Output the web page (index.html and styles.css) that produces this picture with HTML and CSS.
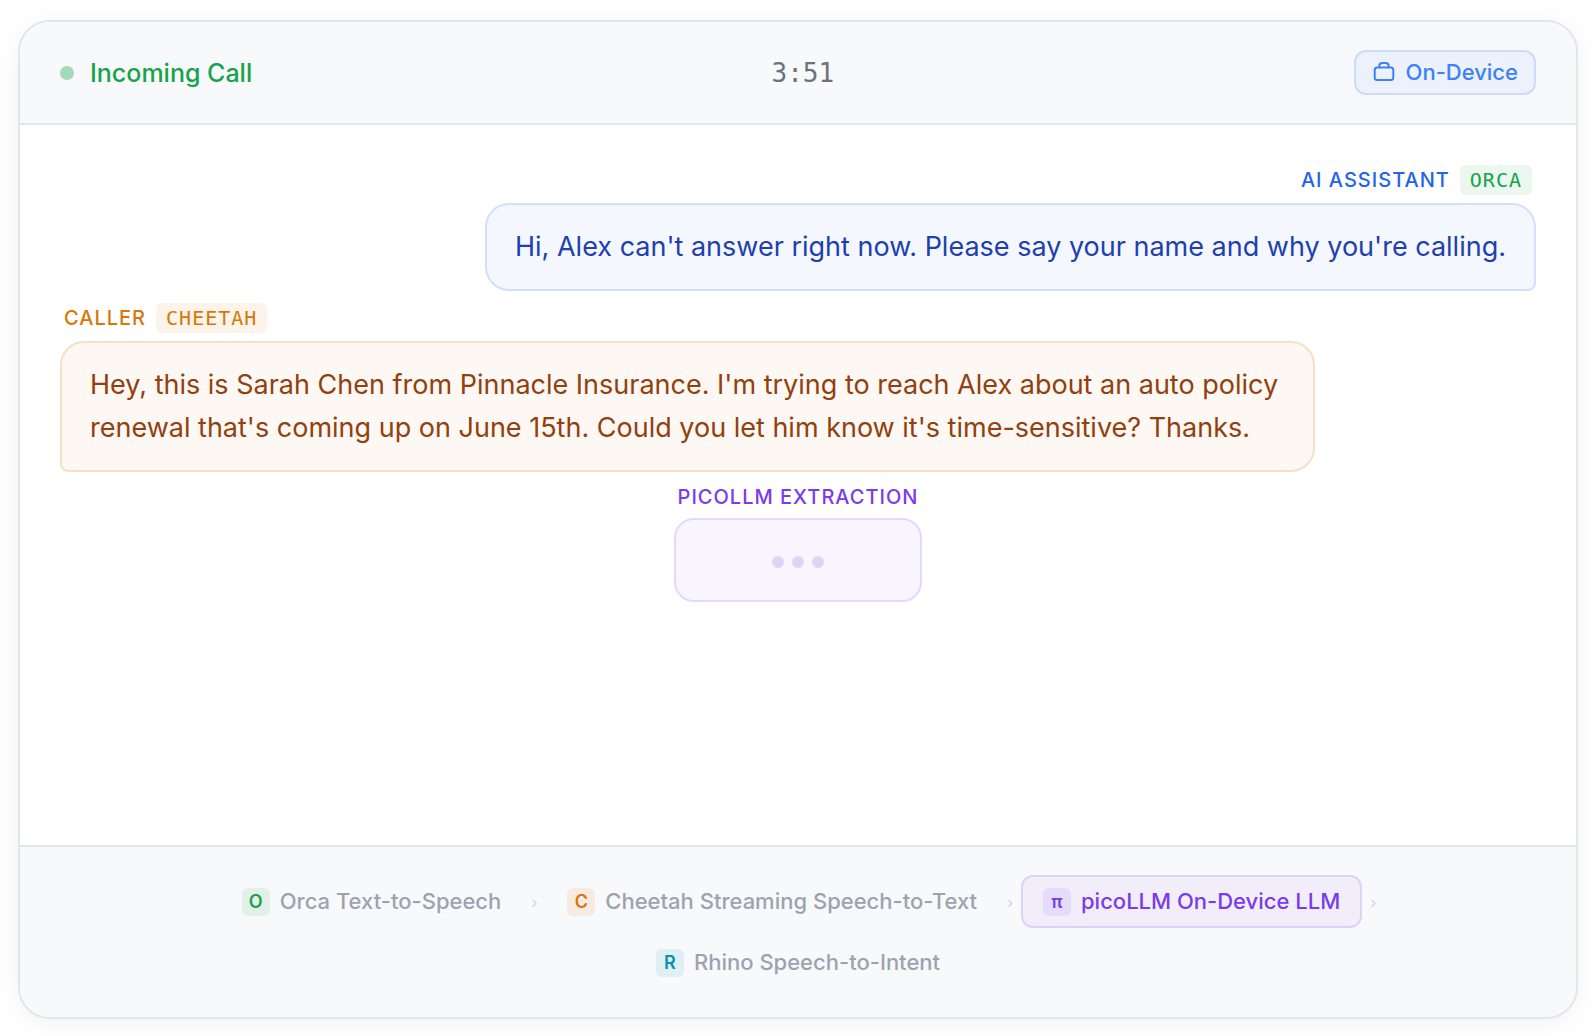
FILE: index.html
```html
<!DOCTYPE html>
<html lang="en">
<head>
  <meta charset="UTF-8">
  <title>Call Screening</title>
  <meta name="viewport" content="width=device-width, initial-scale=1">
  <link rel="stylesheet" href="styles.css">
</head>
<body>
  <main class="card">
    <header class="call-header">
      <div class="status"><span class="status-dot"></span>Incoming Call</div>
      <div class="timer">3:51</div>
      <div class="device-badge">
        <svg width="24" height="24" viewBox="0 0 24 24" fill="none" stroke="currentColor" stroke-width="2">
          <rect x="2.700" y="6.500" width="18.600" height="12.500" rx="2.500"/>
          <path d="M7.300 6.500V5a3 3 0 0 1 3-3h3.400a3 3 0 0 1 3 3V6.500"/>
        </svg>
        On-Device
      </div>
    </header>

    <section class="messages">
      <div class="message assistant">
        <div class="label">AI Assistant <span class="tag">Orca</span></div>
        <p class="bubble">Hi, Alex can't answer right now. Please say your name and why you're calling.</p>
      </div>
      <div class="message caller">
        <div class="label">Caller <span class="tag">Cheetah</span></div>
        <p class="bubble">Hey, this is Sarah Chen from Pinnacle Insurance. I'm trying to reach Alex about an auto policy renewal that's coming up on June 15th. Could you let him know it's time-sensitive? Thanks.</p>
      </div>
      <div class="message extraction">
        <div class="label">picoLLM Extraction</div>
        <div class="bubble typing"><span></span><span></span><span></span></div>
      </div>
    </section>

    <footer class="pipeline">
      <div class="step orca"><span class="step-icon">O</span>Orca Text-to-Speech</div>
      <span class="arrow">›</span>
      <div class="step cheetah"><span class="step-icon">C</span>Cheetah Streaming Speech-to-Text</div>
      <span class="arrow">›</span>
      <div class="step picollm active"><span class="step-icon">π</span>picoLLM On-Device LLM</div>
      <span class="arrow">›</span>
      <div class="step rhino"><span class="step-icon">R</span>Rhino Speech-to-Intent</div>
    </footer>
  </main>
</body>
</html>
```
FILE: styles.css
```css
:root {
  --border: #e2e5ea;
  --panel: #f8f9fb;
  --green: #16a34a;
  --blue: #2563eb;
  --orange: #d97706;
  --purple: #7c3aed;
  --teal: #0891b2;
  --sans: Inter, "Open Sans", sans-serif;
  --mono: "DejaVu Sans Mono", monospace;
}
*, *::before, *::after { box-sizing: border-box; }
body {
  margin: 0;
  padding: 20px 18px 17px;
  min-height: 100vh;
  display: flex;
  background: #fff;
  font-family: var(--sans);
}
.card {
  flex: 1;
  min-width: 0;
  display: flex;
  flex-direction: column;
  background: #fff;
  border: 2px solid var(--border);
  border-radius: 32px;
  box-shadow: 0 4px 24px rgba(0,0,0,0.06);
  overflow: hidden;
}

/* header */
.call-header {
  display: flex;
  align-items: center;
  justify-content: space-between;
  padding: 28px 40px;
  background: var(--panel);
  border-bottom: 2px solid var(--border);
}
.status {
  display: flex;
  align-items: center;
  gap: 16px;
  font-size: 25px;
  font-weight: 500;
  line-height: 34px;
  color: var(--green);
}
.status-dot {
  width: 14px;
  height: 14px;
  border-radius: 50%;
  background: #a2d9b7;
}
.timer {
  font-family: var(--mono);
  font-size: 26px;
  line-height: 34px;
  color: #6b7280;
}
.device-badge {
  display: flex;
  align-items: center;
  gap: 10px;
  padding: 6px 16px;
  font-size: 22px;
  font-weight: 500;
  line-height: 29px;
  color: #3b82f6;
  background: #ecf1fc;
  border: 2px solid #cbdcfb;
  border-radius: 12px;
}

/* messages */
.messages {
  flex: 1;
  display: flex;
  flex-direction: column;
  gap: 12px;
  padding: 40px;
}
.message {
  display: flex;
  flex-direction: column;
  align-items: flex-start;
  gap: 8px;
  max-width: 85%;
}
.label {
  display: flex;
  align-items: center;
  gap: 10px;
  padding: 0 4px;
  font-size: 20px;
  font-weight: 500;
  line-height: 26px;
  letter-spacing: 1px;
  text-transform: uppercase;
}
.tag {
  padding: 2px 10px;
  font-family: var(--mono);
  font-size: 20px;
  font-weight: 500;
  border-radius: 6px;
}
.bubble {
  margin: 0;
  padding: 20px 28px 21px;
  font-size: 27px;
  line-height: 43px;
  border: 2px solid;
  border-radius: 24px;
}
.assistant {
  align-self: flex-end;
  align-items: flex-end;
}
.assistant .label { color: var(--blue); }
.assistant .tag {
  color: var(--green);
  background: #ebf7ef;
}
.assistant .bubble {
  color: #1e40af;
  background: #f4f7fe;
  border-color: #d3dffb;
  border-bottom-right-radius: 8px;
}
.caller .label { color: var(--orange); }
.caller .tag { background: #fcf3eb; }
.caller .bubble {
  color: #92400e;
  background: #fdf8f3;
  border-color: #f6dfc5;
  border-bottom-left-radius: 8px;
}
.extraction {
  align-self: center;
  align-items: stretch;
}
.extraction .label { color: var(--purple); }
.extraction .bubble {
  background: #f8f5fe;
  border-color: #e4d8fb;
  border-radius: 20px;
}
.typing {
  display: flex;
  justify-content: center;
  gap: 8px;
  padding: 36px 28px 32px;
}
.typing span {
  width: 12px;
  height: 12px;
  border-radius: 50%;
  background: #dfd4f3;
}

/* pipeline */
.pipeline {
  display: flex;
  flex-wrap: wrap;
  align-items: center;
  justify-content: center;
  gap: 8px;
  padding: 28px 40px;
  background: var(--panel);
  border-top: 2px solid var(--border);
}
.step {
  display: flex;
  align-items: center;
  gap: 10px;
  padding: 10px 20px;
  font-size: 22px;
  font-weight: 500;
  line-height: 29px;
  color: #9ca3af;
  border: 2px solid transparent;
  border-radius: 12px;
}
.step-icon {
  width: 28px;
  height: 28px;
  font-size: 18px;
  font-weight: 600;
  line-height: 28px;
  text-align: center;
  border-radius: 6px;
}
.orca .step-icon {
  color: var(--green);
  background: #e1f1e8;
}
.cheetah .step-icon {
  color: var(--orange);
  background: #f7ebe1;
}
.picollm .step-icon {
  color: var(--purple);
  background: #e5dcfb;
}
.rhino .step-icon {
  color: var(--teal);
  background: #dfeff4;
}
.step.active {
  color: var(--purple);
  background: #f1eefa;
  border-color: #dfd1fa;
}
.arrow {
  width: 6px;
  font-size: 16px;
  text-align: center;
  color: #d1d5db;
}
```
